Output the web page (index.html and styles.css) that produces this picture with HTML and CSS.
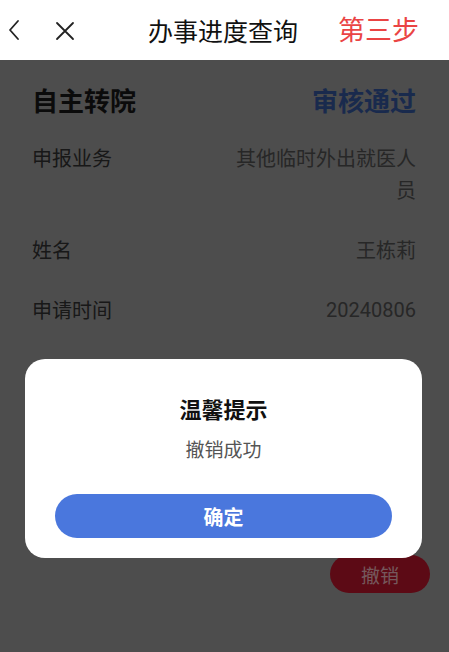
FILE: index.html
```html
<!DOCTYPE html>
<html lang="zh-CN">

<head>
    <meta charset="UTF-8">
    <meta name="viewport" content="width=device-width, initial-scale=1.0">
    <title>办事进度查询</title>
    <link rel="stylesheet" href="styles.css">
</head>

<body>
    <div class="nav">
        <div class="nav-icons">
            <svg class="icon" width="12" height="22" viewBox="0 0 12 22">
                <path d="M10 2 L2 11 L10 20" fill="none" stroke="#222" stroke-width="1.8" stroke-linecap="round" stroke-linejoin="round" />
            </svg>
            <svg class="icon icon-close" width="20" height="20" viewBox="0 0 20 20">
                <path d="M2 2 L18 18 M18 2 L2 18" fill="none" stroke="#222" stroke-width="1.8" stroke-linecap="round" />
            </svg>
        </div>
        <div class="nav-title">办事进度查询</div>
        <div class="nav-step">第三步</div>
    </div>

    <div class="page">
        <div class="card-head">
            <span class="card-type">自主转院</span>
            <span class="card-status">审核通过</span>
        </div>
        <div class="row">
            <span class="label">申报业务</span>
            <span class="value">其他临时外出就医人员</span>
        </div>
        <div class="row">
            <span class="label">姓名</span>
            <span class="value">王栋莉</span>
        </div>
        <div class="row">
            <span class="label">申请时间</span>
            <span class="value num">20240806</span>
        </div>
        <div class="actions">
            <button class="btn-cancel">撤销</button>
        </div>
    </div>

    <div class="mask">
        <div class="dialog">
            <div class="dialog-title">温馨提示</div>
            <div class="dialog-msg">撤销成功</div>
            <button class="dialog-btn">确定</button>
        </div>
    </div>
</body>

</html>
```

FILE: styles.css
```css
* {
    box-sizing: border-box;
}

body {
    margin: 0;
    background-color: #9a9a9a;
    font-family: "Noto Sans CJK SC", "Noto Sans", sans-serif;
    color: #222;
}

.nav {
    position: relative;
    z-index: 20;
    height: 60px;
    background-color: white;
    display: flex;
    align-items: center;
    padding: 0 0 0 8px;
}

.nav-icons {
    display: flex;
    align-items: center;
    gap: 35px;
    width: 128px;
}

.icon-close {
    margin-top: 1px;
}

.nav-title {
    font-size: 25px;
    color: #111;
    width: 170px;
    text-align: center;
    margin-left: 2px;
}

.nav-step {
    font-size: 27px;
    color: #ea4444;
    margin-left: 30px;
    margin-top: -4px;
}

.page {
    padding: 0 33px 0 32px;
}

.card-head {
    display: flex;
    justify-content: space-between;
    align-items: center;
    height: 60px;
    padding-top: 20px;
    margin-bottom: 8px;
    font-size: 26px;
    font-weight: bold;
    line-height: 40px;
}

.card-type {
    color: #161616;
}

.card-status {
    color: #33549a;
}

.row {
    display: flex;
    justify-content: space-between;
    align-items: flex-start;
    padding: 14px 0;
    font-size: 20px;
    line-height: 32px;
}

.label {
    color: #303030;
}

.value {
    color: #4e4e4e;
    max-width: 182px;
    text-align: right;
}

.num {
    font-family: "Roboto", "Noto Sans", sans-serif;
    font-size: 20px;
}

.actions {
    display: flex;
    justify-content: flex-end;
    margin: 215px -14px 0 0;
}

.btn-cancel {
    width: 100px;
    height: 38px;
    border: none;
    border-radius: 19px;
    background-color: #b8142a;
    color: #eab0b8;
    font-family: inherit;
    font-size: 19px;
}

.mask {
    position: fixed;
    top: 0;
    left: 0;
    right: 0;
    bottom: 0;
    z-index: 10;
    background-color: rgba(0, 0, 0, 0.5);
    padding: 359px 27px 0 25px;
}

.dialog {
    background-color: white;
    border-radius: 20px;
    padding: 34px 30px 20px;
    display: flex;
    flex-direction: column;
    align-items: center;
}

.dialog-title {
    font-size: 22px;
    font-weight: bold;
    line-height: 30px;
    color: #111;
}

.dialog-msg {
    font-size: 19px;
    line-height: 26px;
    color: #555;
    margin-top: 13px;
}

.dialog-btn {
    width: 100%;
    height: 44px;
    margin-top: 32px;
    border: none;
    border-radius: 22px;
    background-color: #4a77dd;
    color: white;
    font-family: inherit;
    font-size: 20px;
    font-weight: bold;
}
```
